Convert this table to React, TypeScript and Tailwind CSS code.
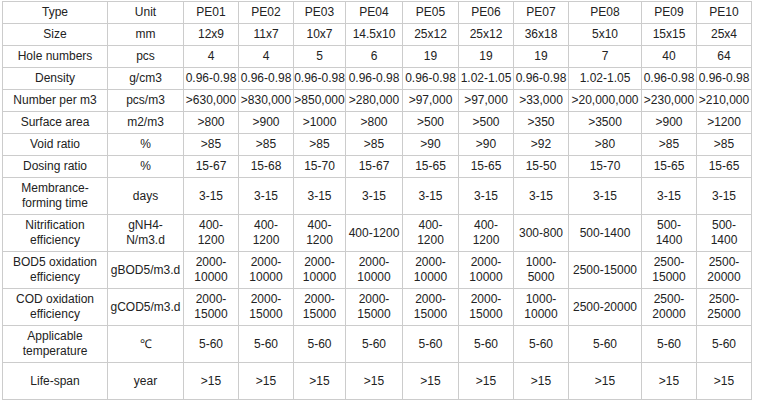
const COLS = ['w-[104px]', 'w-[75px]', 'w-[54px]', 'w-[54px]', 'w-[51px]', 'w-[56px]', 'w-[55px]', 'w-[54px]', 'w-[54px]', 'w-[72px]', 'w-[54px]', 'w-[54px]'];

type Row = { cells: string[]; tall?: boolean };

const ROWS: Row[] = [
  { cells: ['Type', 'Unit', 'PE01', 'PE02', 'PE03', 'PE04', 'PE05', 'PE06', 'PE07', 'PE08', 'PE09', 'PE10'] },
  { cells: ['Size', 'mm', '12x9', '11x7', '10x7', '14.5x10', '25x12', '25x12', '36x18', '5x10', '15x15', '25x4'] },
  { cells: ['Hole numbers', 'pcs', '4', '4', '5', '6', '19', '19', '19', '7', '40', '64'] },
  { cells: ['Density', 'g/cm3', '0.96-0.98', '0.96-0.98', '0.96-0.98', '0.96-0.98', '0.96-0.98', '1.02-1.05', '0.96-0.98', '1.02-1.05', '0.96-0.98', '0.96-0.98'] },
  { cells: ['Number per m3', 'pcs/m3', '>630,000', '>830,000', '>850,000', '>280,000', '>97,000', '>97,000', '>33,000', '>20,000,000', '>230,000', '>210,000'] },
  { cells: ['Surface area', 'm2/m3', '>800', '>900', '>1000', '>800', '>500', '>500', '>350', '>3500', '>900', '>1200'] },
  { cells: ['Void ratio', '%', '>85', '>85', '>85', '>85', '>90', '>90', '>92', '>80', '>85', '>85'] },
  { cells: ['Dosing ratio', '%', '15-67', '15-68', '15-70', '15-67', '15-65', '15-65', '15-50', '15-70', '15-65', '15-65'] },
  { tall: true, cells: ['Membrance-\nforming time', 'days', '3-15', '3-15', '3-15', '3-15', '3-15', '3-15', '3-15', '3-15', '3-15', '3-15'] },
  { tall: true, cells: ['Nitrification\nefficiency', 'gNH4-\nN/m3.d', '400-\n1200', '400-\n1200', '400-\n1200', '400-1200', '400-\n1200', '400-\n1200', '300-800', '500-1400', '500-\n1400', '500-\n1400'] },
  { tall: true, cells: ['BOD5 oxidation\nefficiency', 'gBOD5/m3.d', '2000-\n10000', '2000-\n10000', '2000-\n10000', '2000-\n10000', '2000-\n10000', '2000-\n10000', '1000-\n5000', '2500-15000', '2500-\n15000', '2500-\n20000'] },
  { tall: true, cells: ['COD oxidation\nefficiency', 'gCOD5/m3.d', '2000-\n15000', '2000-\n15000', '2000-\n15000', '2000-\n15000', '2000-\n15000', '2000-\n15000', '1000-\n10000', '2500-20000', '2500-\n20000', '2500-\n25000'] },
  { tall: true, cells: ['Applicable\ntemperature', '℃', '5-60', '5-60', '5-60', '5-60', '5-60', '5-60', '5-60', '5-60', '5-60', '5-60'] },
  { tall: true, cells: ['Life-span', 'year', '>15', '>15', '>15', '>15', '>15', '>15', '>15', '>15', '>15', '>15'] },
];

export default function App() {
  return (
    <div className="w-[757px] h-[400px] bg-white pl-[2px] pt-[1px] font-['Liberation_Sans',Arial,sans-serif] text-[12px] text-[#222]">
      <div className="inline-flex flex-col gap-px bg-[#ccc] border border-[#ccc]">
        {ROWS.map((row, r) => (
          <div key={r} className="flex gap-px">
            {row.cells.map((c, i) => (
              <div
                key={i}
                className={`${COLS[i]} ${row.tall ? 'h-[36px]' : 'h-[21px]'} bg-white flex items-center justify-center text-center leading-[15px] whitespace-pre-line`}
              >
                {c}
              </div>
            ))}
          </div>
        ))}
      </div>
    </div>
  );
}
